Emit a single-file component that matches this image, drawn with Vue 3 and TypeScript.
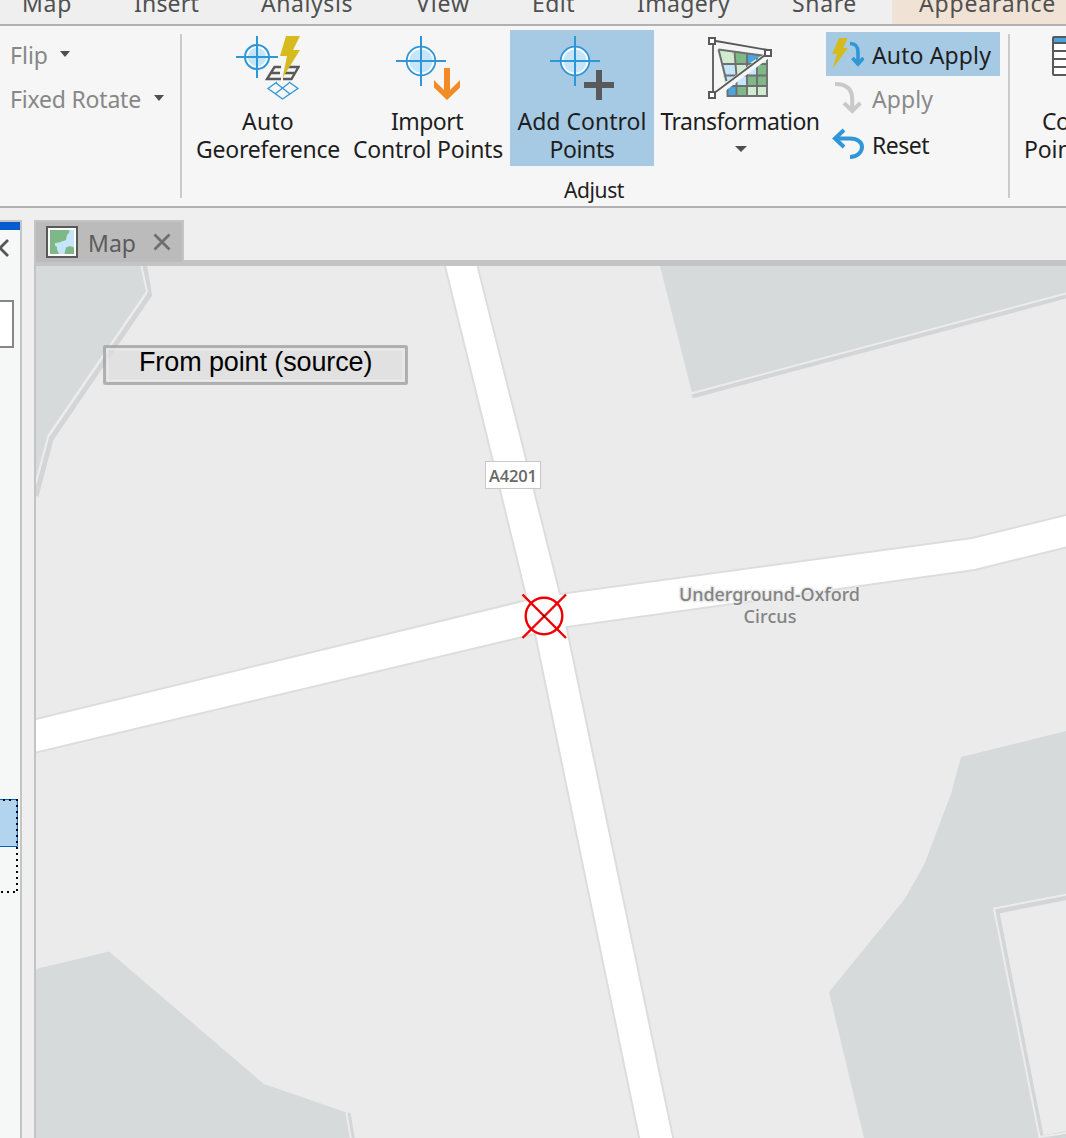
<script setup lang="ts">
import type { Directive } from 'vue'

interface Tab {
  label: string
  advance: number
  width: number
}

const tabs: Tab[] = [
  { label: 'Map', advance: 112, width: 50 },
  { label: 'Insert', advance: 127, width: 65 },
  { label: 'Analysis', advance: 155, width: 92 },
  { label: 'View', advance: 116, width: 54 },
  { label: 'Edit', advance: 105, width: 43 },
  { label: 'Imagery', advance: 155, width: 93 },
  { label: 'Share', advance: 100, width: 65 },
]

// Tracks a label out (or in) so that it spans the given width.
const vFit: Directive<HTMLElement, number> = {
  mounted(el, { value }) {
    const count = (el.textContent ?? '').trim().length
    const natural = el.getBoundingClientRect().width
    el.style.letterSpacing = `${(value - natural) / count}px`
  },
}
</script>

<template>
  <div class="app">
    <nav class="tabs">
      <div v-for="t in tabs" :key="t.label" class="tab" :style="{ width: t.advance + 'px' }">
        <span v-fit="t.width">{{ t.label }}</span>
      </div>
      <div class="tab context"><span v-fit="137">Appearance</span></div>
    </nav>

    <header class="ribbon">
      <section class="group transform-group">
        <div class="menu-item"><span v-fit="38">Flip</span><i class="caret" /></div>
        <div class="menu-item"><span v-fit="131">Fixed Rotate</span><i class="caret wide" /></div>
      </section>

      <section class="group adjust">
        <div class="buttons">
          <button class="big auto">
            <svg width="64" height="64" viewBox="0 0 64 64">
              <circle cx="21" cy="21" r="12" fill="#fff" stroke="#2f96d8" stroke-width="2" />
              <circle cx="21" cy="21" r="9.2" fill="#c5e5fa" />
              <path d="M21 0v42M0 21h42" stroke="#2f96d8" stroke-width="2" fill="none" />
              <path d="M45 31H38.5L31 43H45M35.5 37H44M52 31H62.5L55.5 43H47M48 37H58" fill="none" stroke="#595959" stroke-width="2.400" />
              <path d="M50 0H64L57 14H64L46.5 42L51 20H44Z" fill="#d5bb20" />
              <path d="M41 46L32 52.5L46.500 63L62 52.500L53 46M40 47L54 58M53 47L39 58" fill="none" stroke="#2f96d8" stroke-width="1.300" />
            </svg>
            <span class="line"><span v-fit="52">Auto</span></span>
            <span class="line"><span v-fit="144">Georeference</span></span>
          </button>
          <button class="big import">
            <svg width="64" height="64" viewBox="0 0 64 64">
              <circle cx="25" cy="25" r="14.300" fill="#fff" stroke="#2f96d8" stroke-width="1.800" />
              <circle cx="25" cy="25" r="11.500" fill="#c5e5fa" />
              <path d="M25 0v50M0 25h50" stroke="#2f96d8" stroke-width="2" fill="none" />
              <path d="M48 32h6v22l10-10v7.500L51 64L38 51.500V44l10 10z" fill="#f28a25" />
            </svg>
            <span class="line shift"><span v-fit="72">Import</span></span>
            <span class="line"><span v-fit="150">Control Points</span></span>
          </button>
          <button class="big add active">
            <svg width="64" height="64" viewBox="0 0 64 64">
              <circle cx="25" cy="25" r="14.300" fill="#fff" stroke="#2f96d8" stroke-width="1.800" />
              <circle cx="25" cy="25" r="11.500" fill="#c5e5fa" />
              <path d="M25 0v50M0 25h50" stroke="#2f96d8" stroke-width="2" fill="none" />
              <path d="M34 49h30M49 34v30" stroke="#595959" stroke-width="6" fill="none" />
            </svg>
            <span class="line"><span v-fit="129">Add Control</span></span>
            <span class="line"><span v-fit="65">Points</span></span>
          </button>
          <button class="big transformation">
            <svg width="64" height="64" viewBox="0 0 64 64">
              <path d="M10.500 13.500L58 20V60H19Z" fill="#d1ebd1" />
              <path d="M27 15L39 17V28H28ZM49 29H59V50H49ZM39 40H50V50H39ZM29 50H39V60H29Z" fill="#7fb887" />
              <path d="M39 17L54 19L39 29Z" fill="#49a4e2" />
              <path d="M19 50H29V60H19Z" fill="#49a4e2" />
              <path d="M13 28H27V39H16ZM39 28H49V39H39ZM19 40H39V50H19Z" fill="#c5e5fa" />
              <path d="M10.500 13.500L58 20M59 20V60H19.500V50M26.500 15.500L28.500 40V60M39 17V60M49 22V60M14 28H59M16 39.500H59M18 50H59" fill="none" stroke="#6f6f6f" stroke-width="1.900" />
              <path d="M4 61L60 19" stroke="#f6f6f6" stroke-width="6" />
              <path d="M10.500 13.500L18.500 45" stroke="#6f6f6f" stroke-width="2" />
              <path d="M5 4.500L60 14M5 4V58L60 17" fill="none" stroke="#595959" stroke-width="1.800" />
              <path d="M1 2h6v6H1zM57 14h6v6h-6zM1 56h6v6H1z" fill="#fff" stroke="#595959" stroke-width="2" />
            </svg>
            <span class="line"><span v-fit="159">Transformation</span></span>
            <i class="caret" />
          </button>
          <div class="stack">
            <div class="small active">
              <svg width="32" height="32" viewBox="0 0 32 32">
                <path d="M7 0h8.500l-4 10h4.500L.500 31L5 16H0Z" fill="#d5bb20" />
                <path d="M18 5.500c6 0 8 3 8 9V25M20.500 20l5.500 6l5.500-6" fill="none" stroke="#2f96d8" stroke-width="3.600" />
              </svg>
              <span v-fit="119">Auto Apply</span>
            </div>
            <div class="small disabled">
              <svg width="32" height="32" viewBox="0 0 32 32">
                <path d="M3 2c11 0 17.200 5 17.200 15V29M12 21l8.200 8l8.200-8" fill="none" stroke="#c9c9c9" stroke-width="4" />
              </svg>
              <span v-fit="61">Apply</span>
            </div>
            <div class="small reset">
              <svg width="32" height="32" viewBox="0 0 32 32">
                <path d="M12 2L3 10.500L12 19M3 10.500H18c8 0 12 4 12 8.500s-4 10-12 10" fill="none" stroke="#2f96d8" stroke-width="4" />
              </svg>
              <span v-fit="57">Reset</span>
            </div>
          </div>
        </div>
        <div class="caption"><span v-fit="60">Adjust</span></div>
      </section>

      <section class="group table-group">
        <svg width="64" height="64" viewBox="0 0 64 64">
          <rect x="1" y="1" width="52" height="38" rx="1" fill="#fff" stroke="#595959" stroke-width="2" />
          <path d="M2 2h50v4H2z" fill="#49a4e2" />
          <path d="M2 7h50M2 15h50M2 23h50M2 31h50" stroke="#595959" stroke-width="2" />
        </svg>
        <span class="line first"><span v-fit="76">Control</span></span>
        <span class="line"><span v-fit="118">Point Table</span></span>
      </section>
    </header>

    <main class="workspace">
      <aside class="pane">
        <div class="pane-bar" />
        <svg class="pane-close" width="20" height="20" viewBox="0 0 20 20">
          <path d="M-8 2L8 18M8 2L-8 18" stroke="#555" stroke-width="2.800" />
        </svg>
        <div class="field" />
        <div class="selection">
          <svg width="20" height="96" viewBox="0 0 20 96">
            <path d="M0 .500H17.400V47.500H0" fill="#b3d4ee" stroke="#0064be" />
            <path d="M3 0h2v2H3zM9 0h2v2H9z" fill="#000" />
            <path d="M17 0V93" stroke="#000" stroke-width="2" stroke-dasharray="2 4" />
            <path d="M1 93H17" stroke="#000" stroke-width="2" stroke-dasharray="2 4" />
          </svg>
        </div>
      </aside>

      <section class="view">
        <div class="doc-tabs">
          <div class="doc-tab">
            <svg width="32" height="32" viewBox="0 0 32 32">
              <rect x="1" y="1" width="30" height="30" fill="#fff" stroke="#595959" stroke-width="2" />
              <path d="M4 4h24v24H4z" fill="#7fb887" />
              <path d="M23.500 4H28V21.500L24 20L20 21.500L18.500 28H13L11 23.500V21L9 19.500V17L13 16.500L17 15L20 14L21 9L23 7Z" fill="#c5e5fa" />
            </svg>
            <span class="doc-name"><span v-fit="48">Map</span></span>
            <svg class="doc-close" width="18" height="18" viewBox="0 0 18 18">
              <path d="M1.500 1.500l15 15M16.500 1.500l-15 15" stroke="#6e6e6e" stroke-width="2.800" />
            </svg>
          </div>
        </div>

        <svg class="map" width="1030" height="872" viewBox="36 266 1030 872">
          <rect x="36" y="266" width="1030" height="872" fill="#ebebeb" />
          <g fill="#d6dadb">
            <path d="M36 266H141L146.500 291L48 435L36 483Z" />
            <path d="M660 266L692 393L1066 294V266Z" />
            <path d="M36 969L109 951.500L264 1084L348 1113L352 1138H36Z" />
            <path d="M1066 731L961 757L951 794L924.500 864L904 900L829 992L864 1138H1066Z" />
          </g>
          <g fill="none" stroke="#d3d5d6" stroke-width="5">
            <path d="M144 262L149.500 295L51 439L36 496" />
            <path d="M692 396L1066 296" />
            <path d="M348 1113L352.500 1140" />
          </g>
          <g fill="none" stroke="#ececec" stroke-width="2">
            <path d="M140.500 262L147 291.500L48.500 435.500L36 482" />
            <path d="M691 393.500L1066 293.500" />
            <path d="M346.500 1113L351 1140" />
          </g>
          <path d="M996.800 911.300L1070 897V1133L1041.500 1138Z" fill="#ebebeb" stroke="#d3d5d6" stroke-width="5" />
          <path d="M1070 894L994 908.500L1039.500 1137L1070 1132.500" fill="none" stroke="#ececec" stroke-width="2" />
          <g fill="#fff" stroke="#dcdddc" stroke-width="2">
            <path d="M444 262L527 600L30 720.500V754L535 634L640 1142H674L566.500 627L974.500 570L1070 546.500V514L972 538L560 594L476.500 262Z" />
          </g>

          <rect x="485.500" y="461.500" width="55" height="27" fill="#fff" stroke="#c8c8c8" />
          <text class="road" x="489" y="482" textLength="48">A4201</text>
          <g class="place">
            <text x="679" y="601" textLength="181">Underground-Oxford</text>
            <text x="743.500" y="623" textLength="53">Circus</text>
          </g>

          <g fill="none" stroke="#f00000" stroke-width="2.400">
            <circle cx="544" cy="616" r="18.300" />
            <path d="M522.500 594.500L566 638M566 594.500L522.500 638" />
          </g>
          <rect x="543" y="615" width="2" height="2" fill="#300" />

          <rect x="104.500" y="346.500" width="302" height="37" rx="1" fill="#dcdcdc" fill-opacity=".72" stroke="#969696" stroke-opacity=".68" stroke-width="3" />
          <rect x="107.500" y="349.500" width="296" height="31" fill="none" stroke="#eee" stroke-opacity=".6" stroke-width="2" />
          <text class="tip" x="139" y="371" textLength="233.500">From point (source)</text>
        </svg>
      </section>
    </main>
  </div>
</template>

<style>
body {
  margin: 0;
  overflow: hidden;
}
</style>

<style scoped>
.app {
  width: 1066px;
  height: 1138px;
  display: flex;
  flex-direction: column;
  overflow: hidden;
  background: #efefef;
  color: #1e1e1e;
  font: 23px/28px 'Noto Sans', 'Open Sans', sans-serif;
  white-space: nowrap;
}
.tabs {
  box-sizing: border-box;
  height: 26px;
  flex: none;
  display: flex;
  padding-left: 22px;
  border-bottom: 2px solid #b1b1b1;
  background: #efefef;
  color: #505050;
  overflow: hidden;
}
.tab {
  flex: none;
  line-height: 6px;
}
.tab.context {
  width: 147px;
  padding-left: 27px;
  background: #f0e3d6;
}
.ribbon {
  box-sizing: border-box;
  height: 182px;
  flex: none;
  display: flex;
  border-bottom: 2px solid #b1b1b1;
  background: #f6f6f6;
}
.group {
  flex: none;
}
.transform-group {
  width: 180px;
  padding-top: 7px;
}
.menu-item {
  height: 44px;
  padding-left: 10px;
  display: flex;
  align-items: center;
  color: #878787;
}
.caret {
  width: 0;
  height: 0;
  margin: -2px 0 0 12px;
  border: 5.500px solid transparent;
  border-top: 6px solid #4f4f4f;
  border-bottom: 0;
}
.caret.wide {
  margin-left: 13px;
}
.adjust {
  position: relative;
  width: 828px;
  padding-top: 4px;
}
.adjust::before,
.adjust::after {
  content: '';
  position: absolute;
  top: 8px;
  left: 0;
  width: 2px;
  height: 164px;
  background: #cbcbcb;
}
.adjust::after {
  left: 828px;
}
.buttons {
  display: flex;
  padding-left: 12px;
}
.big {
  box-sizing: border-box;
  height: 136px;
  padding: 6px 0 0;
  border: 0;
  background: none;
  color: inherit;
  font: inherit;
  display: flex;
  flex-direction: column;
  align-items: center;
}
.big svg,
.table-group svg {
  display: block;
  flex: none;
  margin-bottom: 7px;
}
.line {
  display: block;
  height: 28px;
}
.line > span {
  display: inline-block;
}
.line.shift {
  margin-left: -2px;
}
.auto {
  width: 152px;
}
.import {
  width: 164px;
  margin-left: 2px;
}
.add {
  width: 144px;
}
.transformation {
  width: 172px;
}
.transformation .caret {
  margin: 11px 0 0 2px;
  border-width: 6px 6px 0;
}
.active {
  background: #a6c9e4;
}
.stack {
  width: 174px;
  padding-top: 2px;
}
.small {
  height: 44px;
  display: flex;
  align-items: center;
  gap: 8px;
  padding-left: 6px;
}
.small span {
  padding-top: 1px;
}
.disabled {
  color: #8a8a8a;
}
.reset {
  margin-top: 2px;
}
.caption {
  width: 828px;
  margin-top: 10px;
  text-align: center;
  font-size: 21px;
}
.table-group {
  width: 58px;
  padding-top: 10px;
  overflow: hidden;
}
.table-group svg {
  margin-left: 44px;
}
.table-group .line {
  margin-left: 16px;
}
.table-group .first {
  margin-left: 34px;
}
.workspace {
  flex: 1;
  display: flex;
  padding-top: 12px;
}
.pane {
  box-sizing: border-box;
  width: 22px;
  flex: none;
  border: 2px solid #c4c4c4;
  border-width: 2px 2px 0 0;
  background: #f6f8f8;
  overflow: hidden;
}
.pane-bar {
  height: 8px;
  background: #035bcd;
}
.pane-close {
  display: block;
  margin-top: 8px;
}
.field {
  box-sizing: border-box;
  width: 14px;
  height: 48px;
  margin-top: 42px;
  border: 2px solid #868686;
  border-left: 0;
  background: #fff;
}
.selection {
  margin-top: 451px;
}
.selection svg {
  display: block;
}
.view {
  width: 1032px;
  flex: none;
  margin-left: 12px;
}
.doc-tabs {
  height: 40px;
  border-bottom: 6px solid #c4c4c4;
}
.doc-tab {
  box-sizing: border-box;
  width: 150px;
  height: 42px;
  display: flex;
  align-items: center;
  padding-left: 10px;
  border: 2px solid #c4c4c4;
  border-bottom: 0;
  background: #bbb;
  color: #5c5c5c;
}
.doc-name {
  width: 65px;
  margin-left: 10px;
  padding-top: 2px;
}
.map {
  display: block;
  border-left: 2px solid #c4c4c4;
}
.road {
  font: 600 16.500px 'Open Sans', sans-serif;
  fill: #686868;
}
.place text {
  font: 500 18px 'Noto Sans', sans-serif;
  fill: #838383;
  stroke: #ebebeb;
  stroke-width: 3px;
  stroke-linejoin: round;
  paint-order: stroke;
}
.tip {
  font: 27px 'Liberation Sans', Arial, sans-serif;
  fill: #000;
}
</style>
